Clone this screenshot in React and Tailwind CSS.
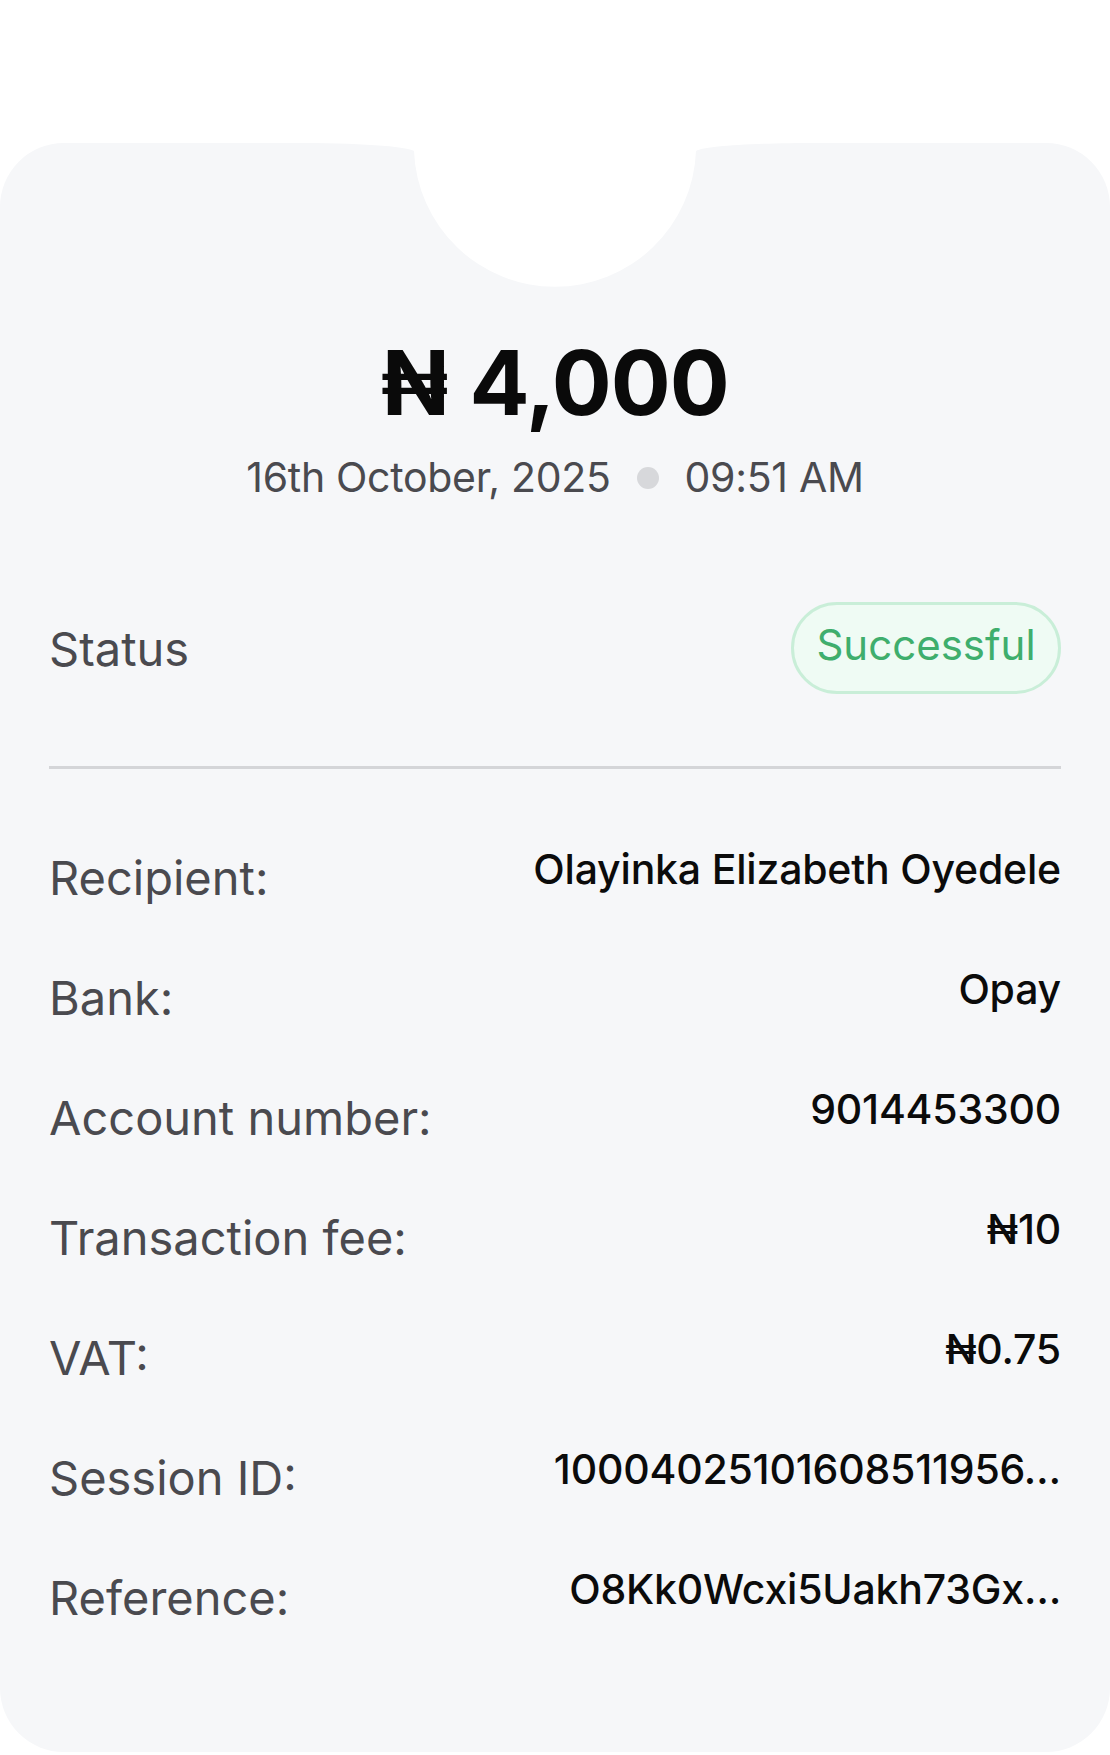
export default function App() {
  const rows = [
    ["Recipient:", "Olayinka Elizabeth Oyedele"],
    ["Bank:", "Opay"],
    ["Account number:", "9014453300"],
    ["Transaction fee:", "₦10"],
    ["VAT:", "₦0.75"],
    ["Session ID:", "10004025101608511956…"],
    ["Reference:", "O8Kk0Wcxi5Uakh73Gx…"],
  ];
  return (
    <div className="w-[1110px] h-[1755px] bg-white font-['Inter','Noto_Sans',sans-serif] overflow-hidden">
      <div className="h-[143px]" />
      <div className="relative h-[1609px] bg-[#f6f7f9] rounded-[64px] px-[49px]">
        <svg
          className="absolute left-0 top-0"
          width="1110"
          height="160"
          viewBox="0 0 1110 160"
        >
          <path
            d="M 290 -1 L 290 0 C 360 0 405 3 414 8 A 141.1 141.1 0 0 0 696 8 C 705 3 750 0 820 0 L 820 -1 Z"
            fill="#ffffff"
          />
        </svg>
        <div className="h-[195px]" />
        <div className="h-[88px] flex items-center justify-center text-[89px] leading-none font-bold text-[#0a0a0a] tracking-[-1px]">
          <span>₦</span>
          <span className="ml-[22px]">4,000</span>
        </div>
        <div className="mt-[33px] h-[37px] flex items-center justify-center text-[41px] leading-none text-[#4a4a4f] tracking-[-0.3px]">
          <span>16th October, 2025</span>
          <span className="mx-[26px] w-[22px] h-[22px] rounded-full bg-[#d7d8db]" />
          <span>09:51 AM</span>
        </div>
        <div className="mt-[106px] h-[92px] flex items-center justify-between">
          <span className="text-[47px] leading-none text-[#4a4a4f]">Status</span>
          <span className="h-[92px] w-[270px] rounded-full border-[3px] border-[#c9eed8] bg-[#effbf4] flex items-center justify-center text-[42px] leading-none text-[#3fae6d] pb-[6px]">
            Successful
          </span>
        </div>
        <div className="mt-[72px] h-[3px] bg-[#d4d5d8]" />
        <div className="mt-[48px] flex flex-col">
          {rows.map(([k, v]) => (
            <div key={k} className="h-[120px] flex items-center justify-between">
              <span className="text-[47px] leading-none text-[#4a4a4f]">{k}</span>
              <span className="mb-[16px] text-[41px] leading-none text-[#0b0b0b] font-medium whitespace-nowrap tracking-[-0.2px]">
                {v}
              </span>
            </div>
          ))}
        </div>
      </div>
    </div>
  );
}
